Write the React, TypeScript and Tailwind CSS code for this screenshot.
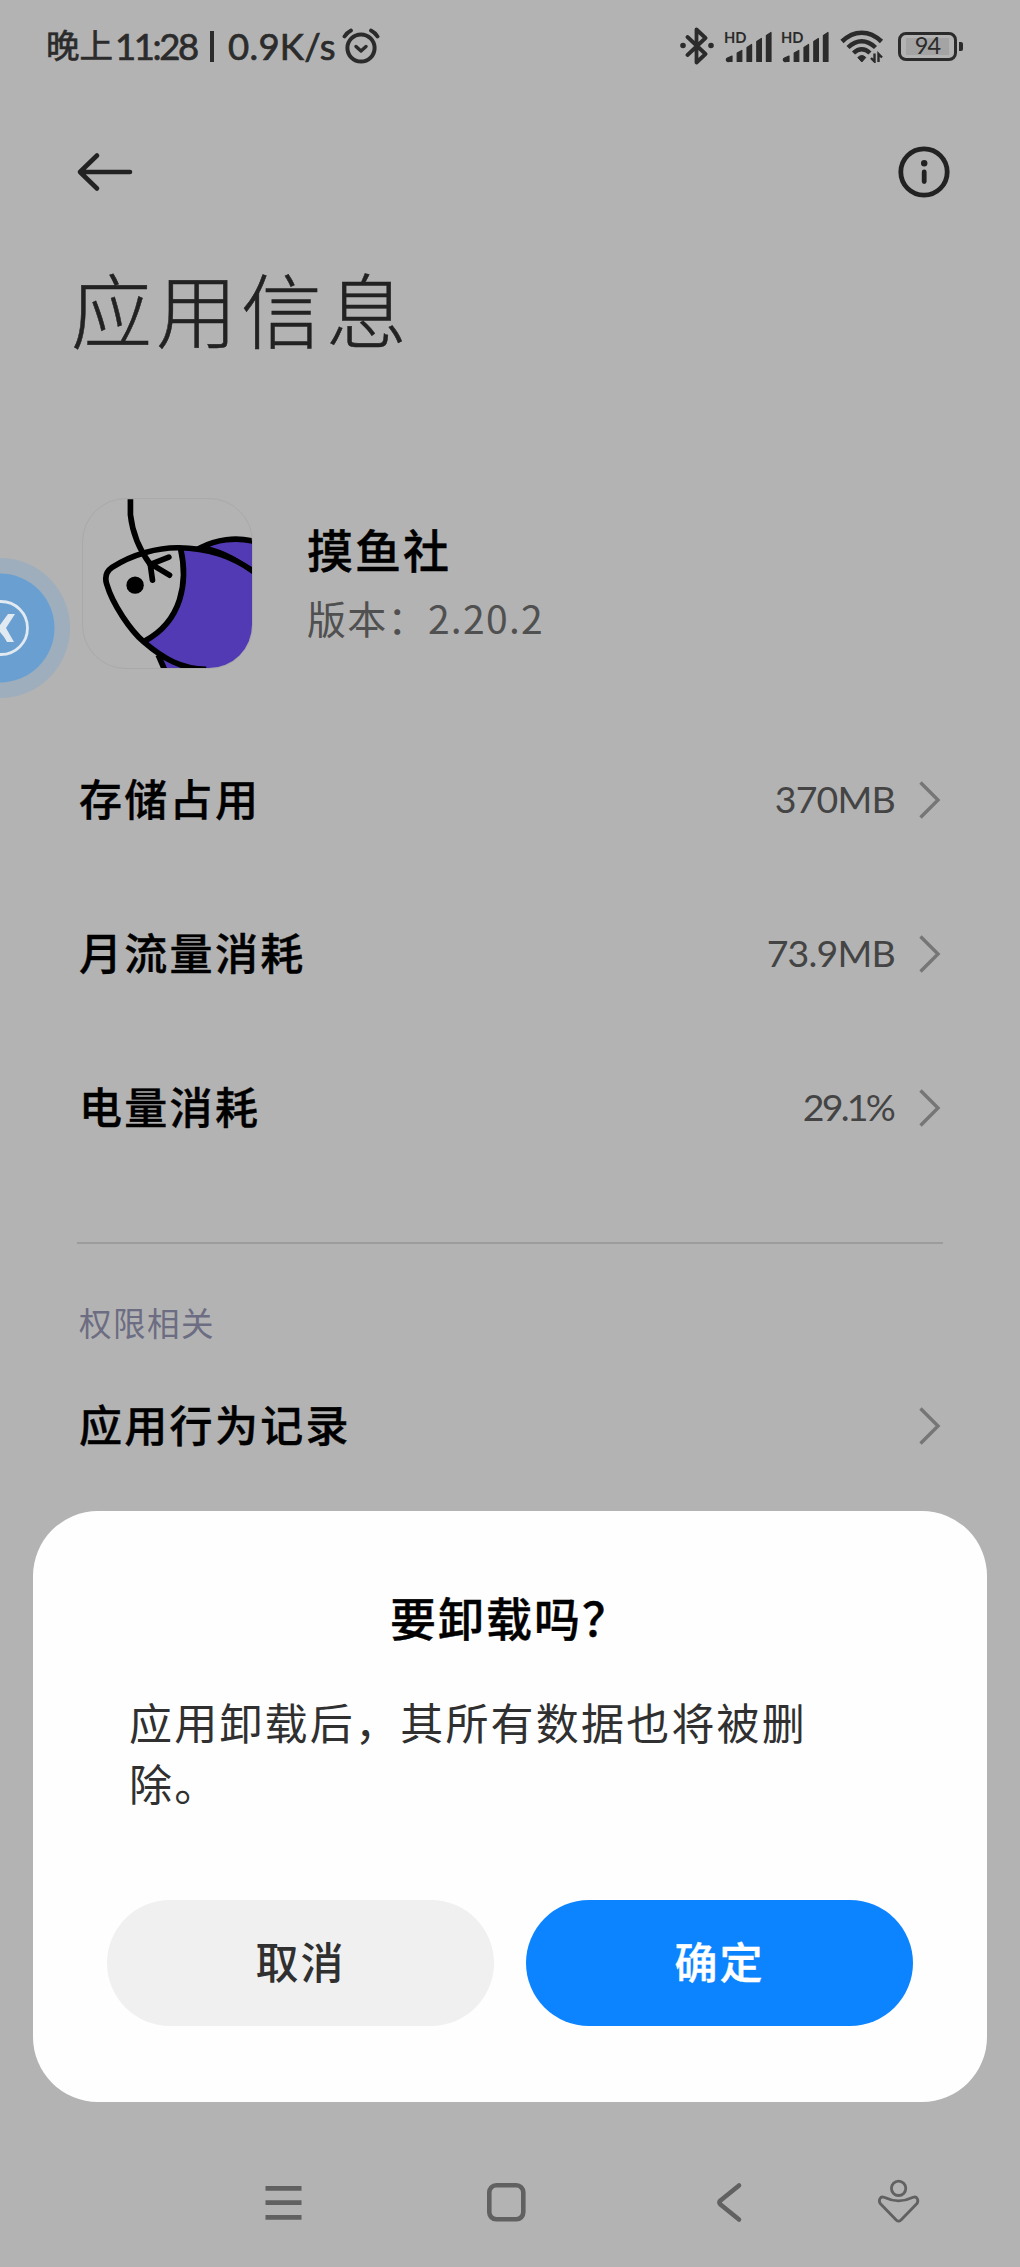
import type { ReactNode } from 'react';

interface InfoRowProps {
  label: string;
  value?: string;
  valueClass?: string;
}

const usageRows: InfoRowProps[] = [
  { label: '存储占用', value: '370MB', valueClass: 'tracking-[-0.8px]' },
  { label: '月流量消耗', value: '73.9MB', valueClass: 'tracking-[-0.8px]' },
  { label: '电量消耗', value: '29.1%', valueClass: 'tracking-[-2.8px] pr-[2px]' },
];

function AlarmIcon() {
  return (
    <svg width="38" height="36" viewBox="0 0 38 36" fill="none" stroke="#2b2b2b" strokeLinecap="round" strokeLinejoin="round">
      <circle cx="19" cy="20" r="13.6" strokeWidth="4" />
      <path d="M14 18.5l5 4.5 5-4.5" strokeWidth="3.4" />
      <path d="M2.5 8.5Q5 4.5 9 2.5M29 2.5Q33 4.5 35.5 8.5" strokeWidth="3.8" />
    </svg>
  );
}

function BluetoothIcon() {
  return (
    <svg width="34" height="38" viewBox="0 0 34 38" fill="none" stroke="#2b2b2b" strokeWidth="3.8" strokeLinejoin="round" strokeLinecap="round">
      <path d="M7.5 10l18 17-9 8.5v-33l9 8.5-18 17" />
      <circle cx="3" cy="18.5" r="1.8" fill="#2b2b2b" strokeWidth="2" />
      <circle cx="31" cy="18.5" r="1.8" fill="#2b2b2b" strokeWidth="2" />
    </svg>
  );
}

function SignalIcon() {
  return (
    <svg width="48" height="34" viewBox="0 0 48 34" fill="#2b2b2b" stroke="#2b2b2b" strokeWidth="1.2" strokeLinejoin="round">
      <text x="0" y="13.5" fontSize="15.5" fontWeight="700" stroke="none" textLength="22.5" lengthAdjust="spacingAndGlyphs" className="font-['Lato',sans-serif]">
        HD
      </text>
      <path d="M3.5 29l4.5-2v5.5H5a1.8 1.8 0 01-1.5-3.5z" />
      <path d="M13.2 24l4.6-2.6v11.1h-4.6z" />
      <path d="M23 18.5l4.6-3v17H23z" />
      <path d="M32.8 12.5l4.6-3v23h-4.6z" />
      <path d="M42.4 6.5l4.6-3v29h-4.6z" />
    </svg>
  );
}

function WifiIcon() {
  return (
    <svg width="44" height="34" viewBox="0 0 44 34" fill="none" stroke="#2b2b2b">
      <path d="M2 12.5Q11 3.7 21.7 3.7T41.5 12.5" strokeWidth="4.6" />
      <path d="M8 18.5Q14.5 12.2 21.7 12.2T35.5 18.5" strokeWidth="4.4" />
      <path d="M13.5 24Q17.5 20.2 21.7 20.2T30 24" strokeWidth="4.4" />
      <path d="M17.8 28.5q4-4 8 0L21.8 33z" fill="#2b2b2b" strokeWidth="1" />
      <path d="M34.5 24.5v8l-3.5-3.5M38.5 33v-8l3.5 3.5" strokeWidth="2.4" />
    </svg>
  );
}

function Battery() {
  return (
    <div className="flex items-center gap-[2px]">
      <div className="flex h-[29px] w-[59px] rounded-[8px] border-[3px] border-[#2b2b2b] px-[5px] py-[3px]">
        <div className="flex flex-1 items-center justify-center bg-[#a4a4a4] font-['Lato'] text-[23.5px] leading-none tracking-[-1px] text-[#2b2b2b]">
          94
        </div>
      </div>
      <div className="h-[9px] w-[4px] rounded-r-[2px] bg-[#2b2b2b]" />
    </div>
  );
}

function StatusBar() {
  return (
    <div className="flex h-[92px] items-center justify-between pr-[57px] pl-[46px]">
      <div className="flex items-center text-[#2b2b2b]">
        <div className="flex items-center font-['Lato','Noto_Sans_CJK_SC',sans-serif] text-[36.5px] leading-none whitespace-pre [-webkit-text-stroke:0.7px_#2b2b2b]">
          <span className="w-[69px] text-[33.5px]">晚上</span>
          <span className="w-[95px] tracking-[-2.4px]">11:28</span>
          <span className="mr-[14px] h-[31px] w-[4px] bg-[#2b2b2b]" />
          <span className="w-[114px] tracking-[0.3px]">0.9K/s</span>
        </div>
        <AlarmIcon />
      </div>
      <div className="flex items-center">
        <BluetoothIcon />
        <div className="ml-[10px] flex gap-[9px]">
          <SignalIcon />
          <SignalIcon />
        </div>
        <div className="mr-[14px] ml-[11px]">
          <WifiIcon />
        </div>
        <Battery />
      </div>
    </div>
  );
}

function TopBar() {
  return (
    <div className="flex h-[160px] items-center justify-between pr-[70px] pl-[76px]">
      <svg width="58" height="40" viewBox="0 0 58 40" fill="none" stroke="#222" strokeWidth="4.6" strokeLinecap="round" strokeLinejoin="round">
        <path d="M21 3.5L4 20l17 16.5M4 20h50" />
      </svg>
      <svg width="52" height="52" viewBox="0 0 52 52" fill="none" stroke="#222">
        <circle cx="26" cy="26" r="23.2" strokeWidth="4.8" />
        <circle cx="26.2" cy="17.3" r="3.2" fill="#222" stroke="none" />
        <path d="M26.2 26v9.5" strokeWidth="4.8" strokeLinecap="round" />
      </svg>
    </div>
  );
}

function AppIcon() {
  return (
    <div className="h-[171px] w-[171px] overflow-hidden rounded-[44px] border border-[#a9a9a9]">
      <svg width="171" height="171" viewBox="0 0 512 512" className="-mt-px -ml-px" fill="none" stroke="#000" strokeWidth="17">
        <path d="M355 149C400 125 460 115 520 131V230C460 180 400 155 355 149Z" fill="#533ab5" />
        <path d="M228 470L250 520H370" fill="#533ab5" />
        <path
          d="M295 151C380 150 460 180 520 225V520H370C300 508 250 480 190 430C305 360 325 230 295 151Z"
          fill="#533ab5"
          stroke="none"
        />
        <path d="M520 225C460 180 380 150 290 149C230 148 150 168 90 208Q64 226 74 258C92 320 146 397 185 431C245 483 300 512 372 513" />
        <path d="M295 151C318 250 300 368 188 428" />
        <path d="M145 4V50C150 95 168 150 205 200" />
        <path d="M260 177L207 198L262 231M204 196L211 246" strokeLinecap="round" strokeLinejoin="round" />
        <circle cx="159" cy="261" r="26" fill="#000" stroke="none" />
      </svg>
    </div>
  );
}

function Chevron() {
  return (
    <svg width="22" height="38" viewBox="0 0 22 38" fill="none" stroke="#767676" strokeWidth="3.4">
      <path d="M1.5 1.5L19 19L1.5 36.5" />
    </svg>
  );
}

function InfoRow({ label, value, valueClass = '' }: InfoRowProps) {
  return (
    <div className="flex h-[154px] items-center justify-between">
      <span className="pb-[6px] text-[43px] leading-none font-medium tracking-[2.3px] text-black [-webkit-text-stroke:0.4px_#000]">
        {label}
      </span>
      <div className="flex items-center gap-[24px]">
        {value && <span className={`pb-[3px] font-['Lato'] text-[37.5px] leading-none text-[#444] ${valueClass}`}>{value}</span>}
        <Chevron />
      </div>
    </div>
  );
}

// Assistive ball docked to the left edge of the screen
function FloatingBall() {
  return (
    <svg className="absolute top-[557px] left-0" width="71" height="142" viewBox="0 0 71 142" fill="none">
      <circle cx="0" cy="71" r="70" fill="#9eaebd" />
      <circle cx="0" cy="71" r="54.5" fill="#6a9fd1" />
      <circle cx="1" cy="71" r="26.5" stroke="#e1e9f1" strokeWidth="2.8" />
      <path d="M15 57H8L0 68V75L4 80L7 85H14L6 71Z" fill="#e1e9f1" />
    </svg>
  );
}

function DialogButton({ className, children }: { className: string; children: ReactNode }) {
  return (
    <button
      type="button"
      className={`h-[126px] flex-1 rounded-[63px] pb-[5px] text-[43px] leading-none font-medium tracking-[2px] ${className}`}
    >
      {children}
    </button>
  );
}

function UninstallDialog() {
  return (
    <div className="absolute top-[1511px] left-[33px] flex h-[591px] w-[954px] flex-col rounded-[65px] bg-[#fefefe] px-[74px] pt-[74px]">
      <h2 className="text-center text-[46px] leading-[62px] font-medium tracking-[2px] text-black [-webkit-text-stroke:0.4px_#000]">
        要卸载吗？
      </h2>
      <p className="mt-[44px] pr-[20px] pl-[22px] text-[43px] leading-[61px] tracking-[2.2px] text-[#303030]">
        应用卸载后，其所有数据也将被删除。
      </p>
      <div className="mt-[87px] flex gap-[32px]">
        <DialogButton className="bg-[#f0f0f0] text-[#303030]">取消</DialogButton>
        <DialogButton className="bg-[#0d84ff] text-white [-webkit-text-stroke:0.4px_#fff]">确定</DialogButton>
      </div>
    </div>
  );
}

function NavBar() {
  return (
    <div className="absolute top-[2175px] left-0 flex h-[54px] w-full items-center pl-[265px]">
      <svg width="37" height="54" viewBox="0 0 37 54" fill="none" stroke="#616161" strokeWidth="4.8">
        <path d="M.5 13.3h36M.5 27.7h36M.5 42.3h36" />
      </svg>
      <svg className="ml-[184px]" width="40" height="54" viewBox="0 0 40 54" fill="none" stroke="#616161" strokeWidth="4.6">
        <rect x="3.3" y="10.3" width="34" height="34" rx="7" />
      </svg>
      <svg className="ml-[188px]" width="30" height="54" viewBox="0 0 30 54" fill="none" stroke="#616161" strokeWidth="4.6" strokeLinecap="round" strokeLinejoin="round">
        <path d="M25 10.5L6.5 25.5Q4.5 27.5 6.5 29.5L25 44.5" />
      </svg>
      <svg className="ml-[133px]" width="44" height="54" viewBox="0 0 44 54" fill="none" stroke="#616161" strokeWidth="2.8" strokeLinejoin="round">
        <circle cx="21.6" cy="13.3" r="7.2" />
        <path d="M7 22.3Q21.6 29.3 36.2 22.3C40 21 42 25 40 28.5L24 45Q21.6 47.3 19.2 45L3.2 28.5C1.2 25 3.2 21 7 22.3Z" />
      </svg>
    </div>
  );
}

export default function App() {
  return (
    <div className="relative h-[2267px] w-[1020px] overflow-hidden bg-[#b3b3b3] font-['Noto_Sans_CJK_SC',sans-serif]" lang="zh-CN">
      <StatusBar />
      <TopBar />
      <h1 className="flex h-[120px] items-center pb-[12px] pl-[71px] text-[81px] leading-none font-light tracking-[4px] text-[#222] [-webkit-text-stroke:0.5px_#222]">
        应用信息
      </h1>

      {/* App summary */}
      <div className="mt-[126px] flex h-[171px] pl-[82px]">
        <AppIcon />
        <div className="pt-[19px] pl-[54px]">
          <div className="text-[46px] leading-[62px] font-medium tracking-[2px] text-black [-webkit-text-stroke:0.4px_#000]">摸鱼社</div>
          <div className="mt-[8px] text-[39px] leading-[60px] tracking-[1.3px] text-[#505050]">版本：2.20.2</div>
        </div>
      </div>

      {/* Usage */}
      <div className="mt-[54px] pr-[79px] pl-[79px]">
        {usageRows.map((row) => (
          <InfoRow key={row.label} {...row} />
        ))}
      </div>

      <div className="mx-[77px] mt-[57px] h-[2px] bg-[#9c9c9c]" />

      {/* Permissions */}
      <div className="pr-[79px] pl-[79px]">
        <div className="mt-[48px] text-[32.5px] leading-[60px] tracking-[1.5px] text-[#6c6c82]">权限相关</div>
        <div className="-mt-[3px]">
          <InfoRow label="应用行为记录" />
        </div>
      </div>

      <FloatingBall />
      <UninstallDialog />
      <NavBar />
    </div>
  );
}
